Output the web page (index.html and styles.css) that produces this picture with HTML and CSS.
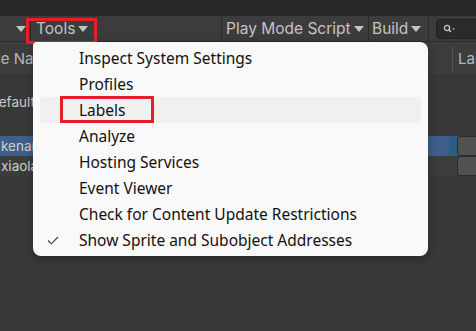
FILE: index.html
```html
<!DOCTYPE html>
<html>
<head>
<meta charset="utf-8">
<link rel="stylesheet" href="styles.css">
</head>
<body>
<div class="app">
  <div class="topstrip"></div>
  <div class="toolbar">
    <div class="tb-item tb-first"><span class="caret"></span></div>
    <div class="tb-item tb-tools"><span class="tb-label">Tools</span><span class="caret"></span></div>
    <div class="tb-spacer"></div>
    <div class="tb-item tb-play"><span class="tb-label">Play Mode Script</span><span class="caret"></span></div>
    <div class="tb-item tb-build"><span class="tb-label">Build</span><span class="caret"></span></div>
    <div class="tb-item tb-search">
      <div class="search-field">
        <svg width="12" height="10" viewBox="0 0 12 10"><circle cx="4" cy="4" r="2.6" fill="none" stroke="#c8c8c8" stroke-width="1.3"/><line x1="6" y1="6" x2="8" y2="8" stroke="#c8c8c8" stroke-width="1.4"/><path d="M9 4.5h3l-1.5 1.6z" fill="#c8c8c8"/></svg>
      </div>
    </div>
  </div>
  <div class="content">
    <div class="header">
      <div class="col-name">ble Name</div>
      <div class="col-rest"><span class="hdr-sep"></span><span class="col-label">Labels</span></div>
    </div>
    <div class="row row-group"><span class="cell-name">Default</span></div>
    <div class="row row-selected"><span class="cell-name">kenan</span><span class="sel-end"></span><span class="btn"></span></div>
    <div class="row row-plain"><span class="cell-name">xiaolan</span><span class="sel-end"></span><span class="btn"></span></div>
  </div>

  <div class="tools-outline"></div>

  <div class="menu">
    <div class="mi"><span class="check"></span><span class="mi-text">Inspect System Settings</span></div>
    <div class="mi"><span class="check"></span><span class="mi-text">Profiles</span></div>
    <div class="mi mi-hover"><span class="check"></span><span class="mi-text">Labels</span><span class="label-outline"></span></div>
    <div class="mi"><span class="check"></span><span class="mi-text">Analyze</span></div>
    <div class="mi"><span class="check"></span><span class="mi-text">Hosting Services</span></div>
    <div class="mi"><span class="check"></span><span class="mi-text">Event Viewer</span></div>
    <div class="mi"><span class="check"></span><span class="mi-text">Check for Content Update Restrictions</span></div>
    <div class="mi"><span class="check"><svg width="12" height="9" viewBox="0 0 12 9"><path d="M1 4.5l3.3 3.3L11 1" fill="none" stroke="#333" stroke-width="1.1"/></svg></span><span class="mi-text">Show Sprite and Subobject Addresses</span></div>
  </div>
</div>
</body>
</html>
```

FILE: styles.css
```css
* { box-sizing: border-box; }
html, body { margin: 0; padding: 0; }
body {
  width: 476px;
  height: 331px;
  overflow: hidden;
  background: #383838;
  font-family: Inter, "Liberation Sans", sans-serif;
}
.app {
  position: relative;
  width: 476px;
  height: 331px;
  background: #383838;
  overflow: hidden;
}
.topstrip {
  height: 16px;
  background: #282828;
  border-bottom: 1px solid #232323;
}
.toolbar {
  height: 26px;
  background: #3c3c3c;
  display: flex;
  align-items: stretch;
  border-bottom: 1px solid #2a2a2a;
}
.tb-item {
  display: flex;
  align-items: center;
  color: #c4c4c4;
  font-size: 15.5px;
  white-space: nowrap;
  flex: none;
}
.caret {
  width: 0;
  height: 0;
  border-left: 5px solid transparent;
  border-right: 5px solid transparent;
  border-top: 6px solid #c4c4c4;
  margin-left: 3px;
}
.tb-first {
  width: 31px;
  border-right: 1px solid #2a2a2a;
  justify-content: flex-end;
  padding-right: 4px;
}
.tb-tools { padding-left: 5px; width: 70px; }
.tb-spacer { flex: 1; }
.tb-play {
  width: 147px;
  border-left: 1px solid #2a2a2a;
  padding-left: 4px;
}
.tb-build {
  width: 60px;
  border-left: 1px solid #2a2a2a;
  padding-left: 3px;
}
.tb-search {
  border-left: 1px solid #2a2a2a;
  padding-left: 7px;
  width: 48px;
}
.search-field {
  width: 60px;
  height: 20px;
  background: #2a2a2a;
  border: 1px solid #212121;
  border-radius: 4px;
  display: flex;
  align-items: center;
  padding-left: 6px;
  flex: none;
}
.content { color: #c4c4c4; font-size: 13.5px; }
.header {
  height: 34px;
  background: #3c3c3c;
  display: flex;
  align-items: center;
  border-bottom: 1px solid #333;
  white-space: nowrap;
  font-size: 15px;
}
.col-name { width: 464px; flex: none; margin-left: -12px; color: #b8b8b8; }
.col-rest { display: flex; align-items: center; height: 100%; }
.hdr-sep { width: 1px; height: 24px; background: #555; margin-right: 5px; }
.col-label { color: #b8b8b8; }
.row {
  height: 20px;
  display: flex;
  align-items: center;
  position: relative;
  white-space: nowrap;
}
.row-group { margin-top: 16px; margin-left: -10px; }
.row-group .cell-name { margin-left: -1px; }
.row-selected { margin-top: 24px; background: #3e5f8a; }
.row-plain { background: #3c3c3c; width: 457px; }
.cell-name { flex: 1; margin-left: 1px; color: #d0d0d0; }
.row-group .cell-name { color: #c8c8c8; }
.sel-end { width: 8px; height: 100%; }
.row-selected .sel-end { background: #2c5d87; }
.btn {
  width: 22px;
  height: 20px;
  background: #515151;
  border: 1px solid #2b2b2b;
  border-radius: 3px;
  margin-right: -3px;
  flex: none;
}
.row-plain .btn { margin-right: -22px; }
.tools-outline {
  position: absolute;
  left: 26px;
  top: 18px;
  width: 71px;
  height: 26px;
  border: 3px solid #e61e2a;
  pointer-events: none;
}
.menu {
  position: absolute;
  left: 33px;
  top: 42px;
  width: 395px;
  height: 214px;
  background: #f9f9f9;
  border-radius: 4px 8px 8px 8px;
  box-shadow: 0 3px 10px rgba(0,0,0,0.3);
  padding: 3px 7px;
  font-family: "Noto Sans", "Open Sans", sans-serif;
  font-size: 15.5px;
  color: #111;
}
.mi {
  height: 26px;
  display: flex;
  align-items: center;
  position: relative;
  border-radius: 4px;
  white-space: nowrap;
}
.mi-hover { background: #f0f0f0; }
.check { width: 39px; display: flex; justify-content: flex-start; padding-left: 7px; }
.label-outline {
  position: absolute;
  left: 20px;
  top: -1px;
  width: 94px;
  height: 27px;
  border: 3px solid #e61e2a;
}
```
